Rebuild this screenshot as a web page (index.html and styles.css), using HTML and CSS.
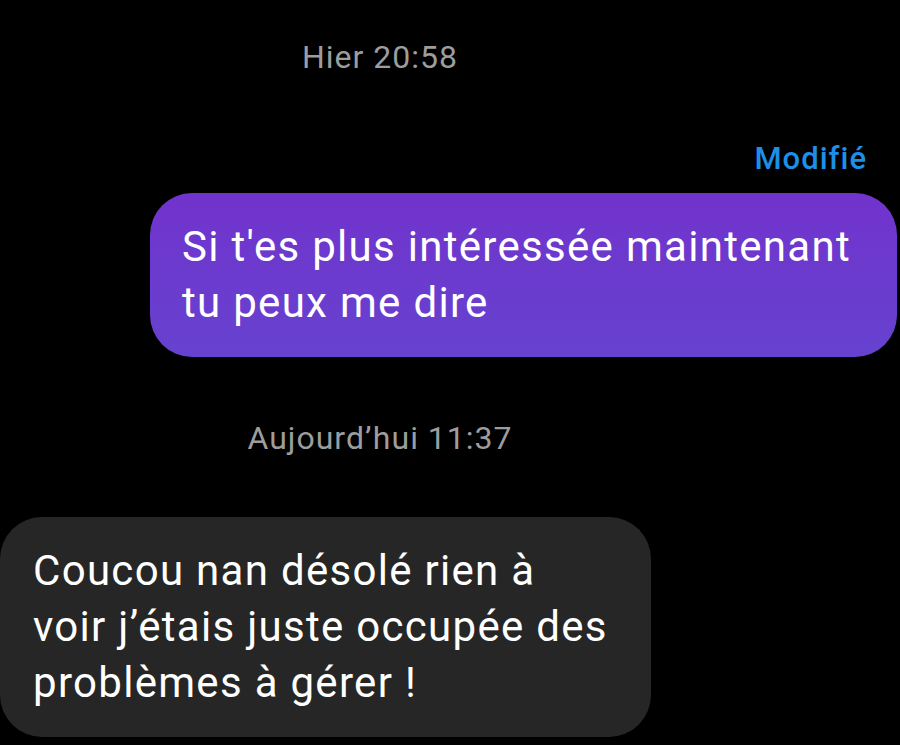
FILE: index.html
```html
<html>

<head>
    <meta charset="utf-8">
    <title>Conversation</title>
    <link rel="stylesheet" href="styles.css">
</head>

<body>
    <div class="thread">
        <div class="stamp stamp-first">Hier 20:58</div>
        <div class="edited">Modifié</div>
        <div class="bubble sent">Si t'es plus intéressée maintenant<br>tu peux me dire</div>
        <div class="stamp stamp-next">Aujourd’hui 11:37</div>
        <div class="bubble received">Coucou nan désolé rien à<br>voir j’étais juste occupée des<br>problèmes à gérer !</div>
    </div>
</body>

</html>
```

FILE: styles.css
```css
* {
    margin: 0;
    padding: 0;
    box-sizing: border-box;
}

body {
    background: #000;
    font-family: Roboto, "Noto Sans", sans-serif;
    overflow: hidden;
}

.thread {
    display: flex;
    flex-direction: column;
    height: 745px;
}

.stamp {
    width: 760px;
    text-align: center;
    font-size: 32px;
    line-height: 36px;
    letter-spacing: 1px;
    color: #9d9d9d;
}

.stamp-first {
    margin-top: 39px;
}

.stamp-next {
    margin-top: 63px;
}

.edited {
    align-self: flex-end;
    margin-top: 66px;
    margin-right: 33px;
    font-size: 31px;
    line-height: 36px;
    letter-spacing: 1px;
    font-weight: 500;
    color: #1d8fe8;
}

.bubble {
    font-size: 42px;
    line-height: 56px;
    letter-spacing: 1.3px;
    color: #fff;
    border-radius: 42px;
    padding: 26px 32px;
}

.sent {
    align-self: flex-end;
    width: 747px;
    margin-top: 16px;
    margin-right: 3px;
    background: linear-gradient(180deg, #7133cc 0%, #6642d0 100%);
}

.received {
    align-self: flex-start;
    width: 651px;
    margin-top: 61px;
    padding-left: 33px;
    background: #262626;
}
```
